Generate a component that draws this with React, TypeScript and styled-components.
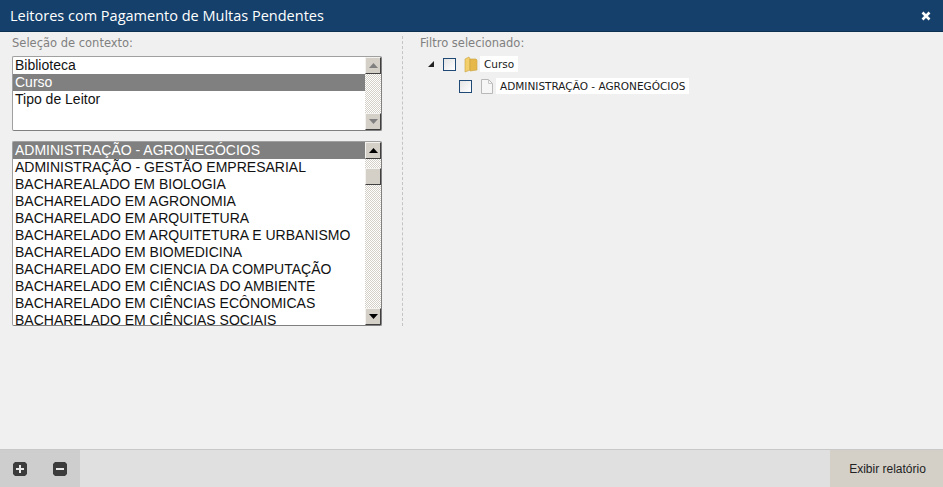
import React from 'react';
import styled, { createGlobalStyle } from 'styled-components';

const GlobalStyle = createGlobalStyle`
    html, body {
        margin:0;
        padding:0;
        height:100%;
        background:#f0f0f0;
    }
    #root {
        height:100%;
    }
`

const Page = styled.div`
    display:flex;
    flex-direction:column;
    width:943px;
    height:487px;
    overflow:hidden;
    background:#f0f0f0;
`

const TitleBar = styled.header`
    display:flex;
    align-items:center;
    justify-content:space-between;
    box-sizing:border-box;
    flex:none;
    height:32px;
    padding:0 12px 0 10px;
    background:#14406b;
    border-bottom:1px solid #0d2f50;
    color:#fff;
    font-family:"Open Sans", sans-serif;
    font-size:14.5px;
`

const Main = styled.main`
    flex:1;
    display:flex;
    align-items:flex-start;
    padding-top:4px;
`

const ContextColumn = styled.section`
    box-sizing:border-box;
    width:403px;
    height:290px;
    padding-left:12px;
    padding-right:20px;
    border-right:1px dashed #c4c4c4;
`

const FilterColumn = styled.section`
    flex:1;
    padding-left:17px;
`

const SectionLabel = styled.div`
    height:20px;
    font-family:"DejaVu Sans", sans-serif;
    font-size:11.5px;
    line-height:15px;
    color:#808080;
`

const ListBox = styled.div<{ $height: number; $gap?: number }>`
    display:flex;
    box-sizing:border-box;
    width:370px;
    height:${({ $height }) => $height}px;
    margin-bottom:${({ $gap }) => $gap || 0}px;
    background:#fff;
    border:1px solid #a0a0a0;
    border-right-color:#808080;
    border-bottom-color:#808080;
    border-radius:2px;
`

const Rows = styled.ul`
    flex:1;
    margin:0;
    padding:0;
    overflow:hidden;
    list-style:none;
    font-family:"Liberation Sans", sans-serif;
    font-size:14px;
    color:#111;
`

const Row = styled.li<{ $selected?: boolean }>`
    height:17px;
    padding-left:2px;
    line-height:17px;
    white-space:nowrap;
    background:${({ $selected }) => ($selected ? '#808080' : 'transparent')};
    color:${({ $selected }) => ($selected ? '#fff' : 'inherit')};
`

const ScrollBar = styled.div`
    flex:none;
    display:flex;
    flex-direction:column;
    justify-content:space-between;
    position:relative;
    width:16px;
    background:repeating-conic-gradient(#d4d0c8 0 25%, #fff 0 50%) 0 0 / 2px 2px;
`

const ScrollButton = styled.div<{ $disabled?: boolean }>`
    display:flex;
    align-items:center;
    justify-content:center;
    box-sizing:border-box;
    width:16px;
    height:17px;
    background:#d4d0c8;
    border:1px solid;
    border-color:#f4f2ee #404040 #404040 #f4f2ee;
    color:${({ $disabled }) => ($disabled ? '#808080' : '#000')};
`

const ScrollThumb = styled(ScrollButton)`
    position:absolute;
    top:26px;
    left:0;
`

const Arrow = ({ down }: { down?: boolean }) => (
    <svg width="9" height="5" viewBox="0 0 9 5" style={{ transform: down ? 'rotate(180deg)' : undefined }}>
        <path d="M4.5 0 9 5H0z" fill="currentColor" />
    </svg>
)

const TreeRow = styled.div<{ $indent: number; $height: number }>`
    display:flex;
    align-items:center;
    height:${({ $height }) => $height}px;
    margin-left:${({ $indent }) => $indent}px;
`

const Expander = styled.svg`
    width:6px;
    height:6px;
    margin-right:9px;
`

const CheckBox = styled.span`
    box-sizing:border-box;
    width:13px;
    height:13px;
    border:1px solid #1f4a75;
    background:linear-gradient(135deg, #e4e4e4, #fff);
`

const NodeIcon = styled.svg`
    flex:none;
    width:16px;
    height:17px;
    margin-left:7px;
`

const NodeLabel = styled.span`
    height:16px;
    margin-left:1px;
    padding:0 4px;
    background:#fff;
    font-family:"DejaVu Sans", sans-serif;
    font-size:10.5px;
    line-height:16px;
    color:#1a1a1a;
    white-space:nowrap;
`

const Footer = styled.footer`
    flex:none;
    display:flex;
    box-sizing:border-box;
    height:38px;
    background:#e0e0e0;
    border-top:1px solid #c8c8c8;
`

const TreeTools = styled.div`
    display:flex;
    align-items:center;
    box-sizing:border-box;
    width:80px;
    padding-left:13px;
    gap:26px;
    background:#cecece;
`

const ToolButton = styled.button`
    display:flex;
    padding:0;
    border:0;
    background:none;
`

const ReportButton = styled.button`
    width:113px;
    margin-left:auto;
    padding:0 0 0 2px;
    border:0;
    background:#d4d0c8;
    font-family:"Liberation Sans", sans-serif;
    font-size:12px;
    color:#222;
`

const contexts = ['Biblioteca', 'Curso', 'Tipo de Leitor']

const courses = [
    'ADMINISTRAÇÃO - AGRONEGÓCIOS',
    'ADMINISTRAÇÃO - GESTÃO EMPRESARIAL',
    'BACHAREALADO EM BIOLOGIA',
    'BACHARELADO EM AGRONOMIA',
    'BACHARELADO EM ARQUITETURA',
    'BACHARELADO EM ARQUITETURA E URBANISMO',
    'BACHARELADO EM BIOMEDICINA',
    'BACHARELADO EM CIENCIA DA COMPUTAÇÃO',
    'BACHARELADO EM CIÊNCIAS DO AMBIENTE',
    'BACHARELADO EM CIÊNCIAS ECÔNOMICAS',
    'BACHARELADO EM CIÊNCIAS SOCIAIS',
]

const ToolIcon = ({ minus }: { minus?: boolean }) => (
    <svg width="14" height="14" viewBox="0 0 14 14">
        <path d="M2 0h10l2 2v10l-2 2H2l-2-2V2z" fill="#3c3c3c" />
        {minus ? <path d="M3 6h8v2H3z" fill="#e8e8e8" /> : <path d="M6 3h2v3h3v2H8v3H6V8H3V6h3z" fill="#e8e8e8" />}
    </svg>
)

const App = () => {
    return (
        <Page>
            <GlobalStyle />
            <TitleBar>
                <span>Leitores com Pagamento de Multas Pendentes</span>
                <svg width="10" height="10" viewBox="0 0 10 10">
                    <path d="M1.5 1.5l7 7M8.500 1.500l-7 7" stroke="#fff" strokeWidth="2.600" />
                </svg>
            </TitleBar>
            <Main>
                <ContextColumn>
                    <SectionLabel>Seleção de contexto:</SectionLabel>
                    <ListBox $height={75} $gap={10}>
                        <Rows>
                            {contexts.map(item => (
                                <Row key={item} $selected={item === 'Curso'}>{item}</Row>
                            ))}
                        </Rows>
                        <ScrollBar>
                            <ScrollButton $disabled><Arrow /></ScrollButton>
                            <ScrollButton $disabled><Arrow down /></ScrollButton>
                        </ScrollBar>
                    </ListBox>
                    <ListBox $height={185}>
                        <Rows>
                            {courses.map((item, index) => (
                                <Row key={item} $selected={index === 0}>{item}</Row>
                            ))}
                        </Rows>
                        <ScrollBar>
                            <ScrollButton><Arrow /></ScrollButton>
                            <ScrollThumb />
                            <ScrollButton><Arrow down /></ScrollButton>
                        </ScrollBar>
                    </ListBox>
                </ContextColumn>
                <FilterColumn>
                    <SectionLabel>Filtro selecionado:</SectionLabel>
                    <TreeRow $indent={8} $height={16}>
                        <Expander viewBox="0 0 6 6">
                            <path d="M6 0v6H0z" fill="#222" />
                        </Expander>
                        <CheckBox />
                        <NodeIcon viewBox="0 0 16 17">
                            <path d="M2 3l4-2 1 2v11l-5 2z" fill="#f2cf6a" stroke="#c9a13c" strokeWidth=".6" />
                            <path d="M7 3h6l1 1v10l-7 1z" fill="#e6b84a" stroke="#c9a13c" strokeWidth=".6" />
                        </NodeIcon>
                        <NodeLabel>Curso</NodeLabel>
                    </TreeRow>
                    <TreeRow $indent={39} $height={28}>
                        <CheckBox />
                        <NodeIcon viewBox="0 0 16 17">
                            <path d="M2.500 1.500h7l4 4v10h-11z" fill="#f6f6f6" stroke="#b8b8b8" />
                            <path d="M9.500 1.500v4h4" fill="none" stroke="#c8c8c8" />
                        </NodeIcon>
                        <NodeLabel>ADMINISTRAÇÃO - AGRONEGÓCIOS</NodeLabel>
                    </TreeRow>
                </FilterColumn>
            </Main>
            <Footer>
                <TreeTools>
                    <ToolButton><ToolIcon /></ToolButton>
                    <ToolButton><ToolIcon minus /></ToolButton>
                </TreeTools>
                <ReportButton>Exibir relatório</ReportButton>
            </Footer>
        </Page>
    )
}

export default App;
